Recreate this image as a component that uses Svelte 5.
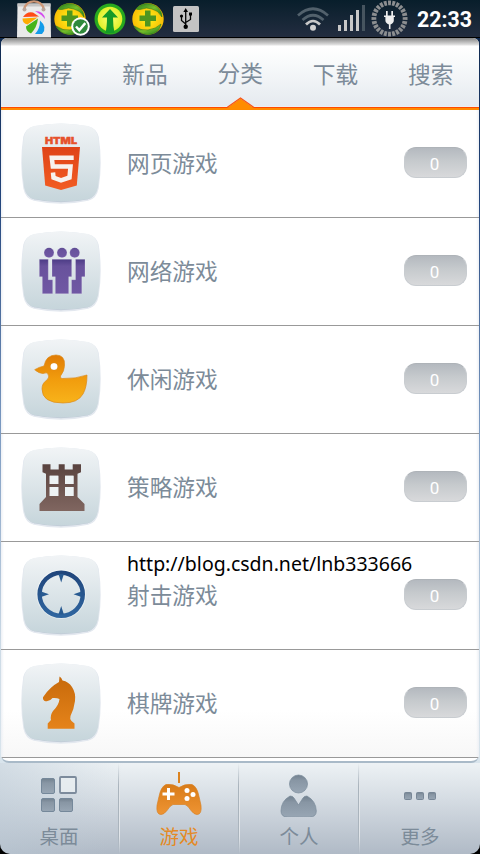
<script>
  const tabs = ['推荐', '新品', '分类', '下载', '搜索'];
  const rows = [
    { name: '网页游戏', icon: 'html' },
    { name: '网络游戏', icon: 'people' },
    { name: '休闲游戏', icon: 'duck' },
    { name: '策略游戏', icon: 'rook' },
    { name: '射击游戏', icon: 'target' },
    { name: '棋牌游戏', icon: 'knight' }
  ];
  const nav = [
    { name: '桌面', icon: 'grid' },
    { name: '游戏', icon: 'pad', active: true },
    { name: '个人', icon: 'user' },
    { name: '更多', icon: 'more' }
  ];
  const ticks = Array.from({ length: 24 }, (_, i) => i * 15);
</script>

<div class="screen">
  <svg class="defs" width="0" height="0">
    <defs>
      <linearGradient id="tile" x2="0" y2="1"><stop stop-color="#f1f4f6" /><stop offset="1" stop-color="#c6d5db" /></linearGradient>
      <linearGradient id="red" x2="0" y2="1"><stop stop-color="#df4318" /><stop offset="1" stop-color="#f25c22" /></linearGradient>
      <linearGradient id="purple" x2="0" y2="1"><stop stop-color="#4c3c86" /><stop offset=".2" stop-color="#68529c" /><stop offset="1" stop-color="#7058a4" /></linearGradient>
      <linearGradient id="duck" x2="0" y2="1"><stop stop-color="#e07c05" /><stop offset=".5" stop-color="#f19c0d" /><stop offset="1" stop-color="#f8b31a" /></linearGradient>
      <linearGradient id="brown" x2="0" y2="1"><stop stop-color="#59433f" /><stop offset="1" stop-color="#806660" /></linearGradient>
      <linearGradient id="horse" x2="0" y2="1"><stop stop-color="#c76a0b" /><stop offset="1" stop-color="#e5831a" /></linearGradient>
      <linearGradient id="blue" x2="0" y2="1"><stop stop-color="#20467c" /><stop offset="1" stop-color="#2f659f" /></linearGradient>
      <linearGradient id="pad" x2="0" y2="1"><stop stop-color="#d87b18" /><stop offset="1" stop-color="#ee9433" /></linearGradient>
      <linearGradient id="steel" x2="0" y2="1"><stop stop-color="#72818f" /><stop offset=".3" stop-color="#8896a4" /><stop offset="1" stop-color="#98a6b4" /></linearGradient>
      <radialGradient id="gold"><stop stop-color="#fff21c" /><stop offset="1" stop-color="#f9bd04" /></radialGradient>
      <radialGradient id="lime"><stop stop-color="#ffff70" /><stop offset="1" stop-color="#dff02a" /></radialGradient>
      <linearGradient id="leaf" x2="1" y2="1"><stop stop-color="#237b1b" /><stop offset=".5" stop-color="#76bd2b" /><stop offset="1" stop-color="#1d7a1b" /></linearGradient>
    </defs>
  </svg>

  {#snippet shield()}
    <circle cx="16" cy="16" r="15.7" fill="url(#gold)" />
    <path d="M4 6C10-2 24-1 29 9q1 3 1 5-4-7-10-8-6-2-10 0Q7 7 4 6Z" fill="url(#leaf)" stroke="#267b1c" stroke-width=".6" />
    <path d="M2 23q7 5 14 4 8-1 13-6-2 10-13 10.500Q6 31 2 23Z" fill="url(#leaf)" stroke="#267b1c" stroke-width=".6" />
    <path d="M13 7.500h5.500v5H24V18h-5.500v5.500H13V18H7.500v-5.500H13Z" fill="#4f961f" />
  {/snippet}

  <header class="status">
    <svg class="bag" width="36" height="38" viewBox="0 0 36 38">
      <path d="M1.500 3.500h33l.5 34H1Z" fill="#eaeaea" />
      <path d="M1.500 3.500h33v3h-33Z" fill="#c5c5c5" />
      <path d="M8 10C10-1.500 26-1.500 28 10" fill="none" stroke="#cf9877" stroke-width="2.400" />
      <circle cx="8.500" cy="9.500" r="2" fill="#b9a59b" /><circle cx="27.500" cy="9.500" r="2" fill="#b9a59b" />
      <path d="M7 17q4-6 10-4.500l6 4Z" fill="#ff4b16" />
      <path d="M19 11q9 0 10 8-4-5-10-8Z" fill="#d44bf0" />
      <path d="M6.500 18.500l15-1-10 7q-5-1-5-6Z" fill="#ffab00" />
      <path d="M22 18.500q-1 9-7 15-5-2-5-7Z" fill="#47b51c" />
      <path d="M24 20.500q8 7 2 13.500h-7q5-5 5-13.500Z" fill="#139be9" />
    </svg>
    <svg class="s1" width="37" height="37" viewBox="0 0 37 37">
      {@render shield()}
      <circle cx="26.500" cy="23.500" r="9.300" fill="#fff" /><circle cx="26.500" cy="23.500" r="7.300" fill="#2f893b" />
      <path d="m22 23.500 3.300 3.600 6-7" fill="none" stroke="#fff" stroke-width="2.400" />
    </svg>
    <svg class="s2" width="32" height="32" viewBox="0 0 32 32">
      <circle cx="16" cy="16" r="15.500" fill="#28a91f" /><circle cx="16" cy="16" r="12.300" fill="url(#lime)" />
      <path d="M16 6l8 8.500h-5q0 9 1.600 15.500h-9.200Q13 24 13 14.500H8Z" fill="#159a28" />
    </svg>
    <svg class="s3" width="32" height="32" viewBox="0 0 32 32">{@render shield()}</svg>
    <svg class="usb" width="26" height="26" viewBox="0 0 26 26">
      <rect width="26" height="26" rx="1.500" fill="#c3c3c3" />
      <path d="M12.700 21V5M12.700 18L8.500 14.500V10M12.700 16.500l4.800-3V8" fill="none" stroke="#050505" stroke-width="1.300" />
      <circle cx="12.700" cy="20.800" r="2.200" /><path d="m12.700 2 2.300 4h-4.600Z" /><circle cx="8.500" cy="10" r="1.600" /><path d="M16 6.500h3v3h-3Z" />
    </svg>
    <span class="grow"></span>
    <svg class="wifi" width="32" height="24" viewBox="0 0 32 24" fill="none" stroke-width="2.700">
      <path d="M1 8.500q15-13.500 30 0M5.500 13q10.500-9.500 21 0" stroke="#52616c" />
      <path d="M9 17.500q7-7 14 0" stroke="#c9c9c9" /><circle cx="16" cy="20.800" r="3" fill="#d0d0d0" />
    </svg>
    <svg class="signal" width="27" height="26" viewBox="0 0 27 26" fill="#c8c8c8">
      <path d="M0 20h3v6H0ZM6 15h3v11H6ZM12 10h3v16h-3ZM18 5h3v21h-3Z" /><path d="M24 0h3v26h-3Z" fill="#46545f" />
    </svg>
    <svg class="power" width="37" height="37" viewBox="0 0 37 37">
      {#each ticks as a}<path d="M16.900.5h3.200l-.3 4.800h-2.600Z" fill="#8c8e90" transform={`rotate(${a} 18.500 18.500)`} />{/each}
      <path d="M15 11h1.700v4.500h3.600V11H22v4.500h2V17h-1.200v3.500q0 2.500-3.300 4V29h-1.600v-4.500q-3.500-1.500-3.500-4V17H13v-1.500h2Z" fill="#eee" />
    </svg>
    <time>22:33</time>
  </header>

  <main>
    <div class="tabs">
      {#each tabs as label, i}<span class:raised={i === 0 || i === 2}>{label}</span>{/each}
      <svg class="pointer" width="28" height="12" viewBox="0 0 28 12"><path d="M0 11 13.500 1.500 27 11v1H0Z" fill="#ff8c00" /><path d="M0 10.500 13.500 1 27 10.500" fill="none" stroke="#f7551a" stroke-width="1.200" /></svg>
    </div>
    <div class="list">
      {#each rows as row}
        <div class="row">
          <svg class="tile" width="82" height="84" viewBox="0 0 82 84">
            <path d="M14 5Q41-.5 68 5q8 2 10 10 4 26 0 51-2 10-10 12-27 6-54 0Q6 76 4 66 0 41 4 15 6 7 14 5Z" fill="#bfc9d6" stroke="#e3e8ef" stroke-width="1.500" />
            <path d="M14 4Q41-1 68 4q8 2 10 11 4 26 0 50-2 10-10 12-27 5-54 0Q6 75 4 65 0 41 4 15 6 6 14 4Z" fill="url(#tile)" />
            {#if row.icon === 'html'}
              <text x="25" y="22" class="html" textLength="32" lengthAdjust="spacingAndGlyphs">HTML</text>
              <path d="M22 25h38l-3.200 38.500L41 68l-15.800-4.500Z" fill="url(#red)" />
              <path d="M53.700 35.800H31.800l1 8.700h17.700l-1 11-8.500 2.800-7.500-2.600-.5-5.200" fill="none" stroke="#f7f2ee" stroke-width="4.500" />
            {:else if row.icon === 'people'}
              <g fill="url(#purple)" stroke="#fff" stroke-opacity=".35" stroke-width=".6"><circle cx="29" cy="22.700" r="5" /><circle cx="42" cy="22.700" r="5" /><circle cx="54.700" cy="22.700" r="5" />
                <path d="M19.300 29.300h9v20.400h4.400v14H22.300v-17h-3ZM32 29.300h19.700v17.400h-3v17H35.300v-17H32ZM55.500 29.300H65v17.400h-3.200v17H51.500v-14h4Z" /></g>
            {:else if row.icon === 'duck'}
              <path fill-rule="evenodd" d="M14.700 31.700Q19 29 24 28 26 17 36 17q9 0 8.500 10 0 6-4 11-1 2.500 2 2.500 13 .5 24.500-3.500 0 12-4 19-5 9-20 9-21 0-21-14 0-6 5-9 3-3 1-6-1-2-5-.5-4 0-8.300-3.800ZM34 25a3.500 3.500 0 1 0 0 7 3.500 3.500 0 0 0 0-7Z" fill="url(#duck)" stroke="#dd8a18" stroke-width=".7" />
              <circle cx="34" cy="28.500" r="3.300" fill="#fff" />
            {:else if row.icon === 'rook'}
              <path fill-rule="evenodd" d="M22.500 18.300h8v5.200h8.200v-5.200h6v5.200h8v-5.200H61v8l-3.500 1.500V51l7 7v7h-45v-7l6.500-7V27.800l-3.500-1.500ZM29.700 29.700V38h8.600v-8.300Zm15.300 0V38h8.500v-8.300ZM29.700 41v9h8.600v-9ZM45 41v9h8.500v-9Z" fill="url(#brown)" />
              <path d="M29.700 29.700h8.600V38h-8.600ZM45 29.700h8.500V38H45ZM29.700 41h8.600v9h-8.600ZM45 41h8.500v9H45Z" fill="#edf2f4" />
            {:else if row.icon === 'target'}
              <circle cx="41.200" cy="40.300" r="23.800" fill="none" stroke="#fff" stroke-opacity=".4" stroke-width="2" />
              <circle cx="41.200" cy="40.300" r="21.600" fill="none" stroke="url(#blue)" stroke-width="4.400" />
              <path d="M38.500 20h5.400l-2.700 8.500ZM38.500 60.500h5.400L41.200 52ZM21 37.600V43l8-2.700ZM61.500 37.600V43l-8-2.700Z" fill="#285a91" />
            {:else}
              <path d="M39.500 14.500q2 1 3 4 6 1 9.500 6.500 4 6 3 14-1 8-4.500 15-1 3 1 5l3 2.500v5.200H27.700v-5.200L31 58q-1-5 2-9 6-6 6.500-12-3-1.500-7-1-3 4-7 3.200-3-1-2.500-4 3-5 8-9.500 4-3.500 8-5.700Z" fill="url(#horse)" />
            {/if}
          </svg>
          <div class="name">{row.name}{#if row.icon === 'target'}<span class="url">http://blog.csdn.net/lnb333666</span>{/if}</div>
          <span class="count">0</span>
        </div>
      {/each}
    </div>
  </main>

  <nav>
    {#each nav as item}
      <div class="item" class:active={item.active}>
        <svg width="60" height="50" viewBox="0 0 60 50">
          {#if item.icon === 'grid'}
            <g fill="url(#steel)" stroke="#75889a"><rect x="12.500" y="11.500" width="13" height="15" rx="1.500" /><rect x="12.500" y="31.500" width="13" height="13" rx="1.500" /><rect x="30.500" y="31.500" width="13" height="13" rx="1.500" /></g>
            <rect x="31" y="10" width="16" height="16" rx="1" fill="#eef2f5" fill-opacity=".65" stroke="#7c8b9c" stroke-width="1.800" />
          {:else if item.icon === 'pad'}
            <path d="M29 5h2v11h-2Z" fill="#dc831f" />
            <path d="M17 17.500q7-1 13 3 6-4 13-3 5 2 7 12l2 9q1 9-4 9-3 0-6-4-3-5-6-6H24q-3 1-6 6-3 4-6 4-5 0-4-9l2-9q2-10 7-12Z" fill="url(#pad)" stroke="#d88124" stroke-width=".7" />
            <path d="M18 21h3v4.500h4.500v3H21V33h-3v-4.500h-4.500v-3H18Z" fill="#fff" /><g fill="#fff"><circle cx="38" cy="23.500" r="2.500" /><circle cx="44" cy="27.500" r="2.500" /><circle cx="38" cy="31.500" r="2.500" /></g>
          {:else if item.icon === 'user'}
            <g fill="url(#steel)" stroke="#788999" stroke-width=".7"><circle cx="29.500" cy="17" r="9" /><path d="M21 29q3 0 4 2l4.500 7 4.500-7q1-2 4-2 9 5 9.300 15 0 6-7 6.300H19q-7-.3-7-6.300Q12 34 21 29Z" /></g>
          {:else}
            <g fill="url(#steel)" stroke="#788797"><rect x="14.500" y="25.500" width="7" height="7" rx="1" /><rect x="26.500" y="25.500" width="7" height="7" rx="1" /><rect x="38.500" y="25.500" width="7" height="7" rx="1" /></g>
          {/if}
        </svg>
        <span>{item.name}</span>
      </div>
    {/each}
  </nav>
</div>

<style>
  :global(body) { background: #000; }
  .screen { width: 480px; height: 854px; overflow: hidden; display: flex; flex-direction: column; font-family: "Noto Sans CJK SC", sans-serif; background: linear-gradient(#102a50 38px, #23457c 200px, #7897bf 420px, #cddbe6 650px, #dce7ee 790px, #000 800px); }
  .defs { position: absolute; }
  svg { display: block; flex: none; }
  .status { height: 38px; box-sizing: border-box; flex: none; display: flex; align-items: flex-start; background: linear-gradient(#081e2b, #232d40); border-bottom: 1px solid #000; }
  .bag { margin-left: 16px; }
  .s1 { margin: 3px 0 0 2px; }
  .s2 { margin: 3px 0 0 3px; }
  .s3 { margin: 3px 0 0 6px; }
  .usb { margin: 6px 0 0 9px; }
  .grow { flex: 1; }
  .wifi { margin: 7px 9px 0 0; }
  .signal { margin: 5px 6px 0 0; }
  .power { margin: 0 9px 0 0; }
  time { width: 63px; font: 700 21.300px/39px Roboto, sans-serif; color: #fff; white-space: nowrap; }
  main { height: 725px; flex: none; margin: 0 1px; box-sizing: border-box; background: #fff; border-radius: 6px 6px 8px 8px; border-bottom: 2px solid #a9bac8; overflow: hidden; }
  .tabs { height: 72px; box-sizing: border-box; position: relative; display: flex; justify-content: space-between; padding: 18px 25px 0 26px; background: linear-gradient(#ff4a00 1px, #ff8a00 1px) bottom / 100% 3px no-repeat, linear-gradient(#858585, #bbb 4px, #e3e3e3 7px, #fff 8px, #f8fafb 25px, #e5eaef 68px, #f4f1f1 69px); color: #7c8b99; font-size: 22.700px; line-height: 36px; }
  .tabs span { display: block; width: 46px; white-space: nowrap; }
  .tabs .raised { margin-top: -1px; }
  .pointer { position: absolute; left: 226px; top: 59px; }
  .list { background: linear-gradient(90deg, #edf0f5, transparent 3px calc(100% - 3px), #edf0f5), linear-gradient(#fff 600px, #f7f7f7); }
  .row { height: 108px; box-sizing: border-box; border-bottom: 1px solid #999; display: flex; align-items: flex-start; padding: 12px 12px 0 19px; }
  .html { font: 900 9.500px Inter, "Liberation Sans", sans-serif; fill: #e6512b; stroke: #e6512b; stroke-width: .4px; }
  .name { position: relative; margin: 24px 0 0 25px; flex: 1; color: #7c8b99; font-size: 22.700px; line-height: 34px; }
  .url { position: absolute; left: 0; top: -31px; color: #000; font: 19.500px/34px "Noto Sans", sans-serif; white-space: nowrap; }
  .count { margin-top: 25px; width: 63px; height: 31px; box-sizing: border-box; border-radius: 12px; border: 1px solid #c8ccd0; border-top-color: #aeb3b8; background: linear-gradient(#b4b9bf, #c6cacd 45%, #d8d9db); color: #fff; font: 17px/32px Roboto, sans-serif; text-align: center; padding-right: 2px; }
  nav { height: 91px; flex: none; display: flex; background: linear-gradient(100deg, #bccad688, transparent 25%), linear-gradient(#edf2f5, #d5dce3 40%, #b0bac6); border-radius: 0 0 10px 10px; }
  .item { width: 120px; display: flex; flex-direction: column; align-items: center; padding-top: 4px; box-sizing: border-box; color: #7c8b99; font-size: 19.500px; line-height: 38px; }
  .item:not(:last-child) { padding-right: 2px; background: linear-gradient(transparent, #e2e6ea 25% 80%, transparent) right / 1px 100% no-repeat, linear-gradient(transparent, #aab4bd 25% 80%, transparent) right 1px top / 1px 100% no-repeat; }
  .active { color: #e48a26; }
</style>
